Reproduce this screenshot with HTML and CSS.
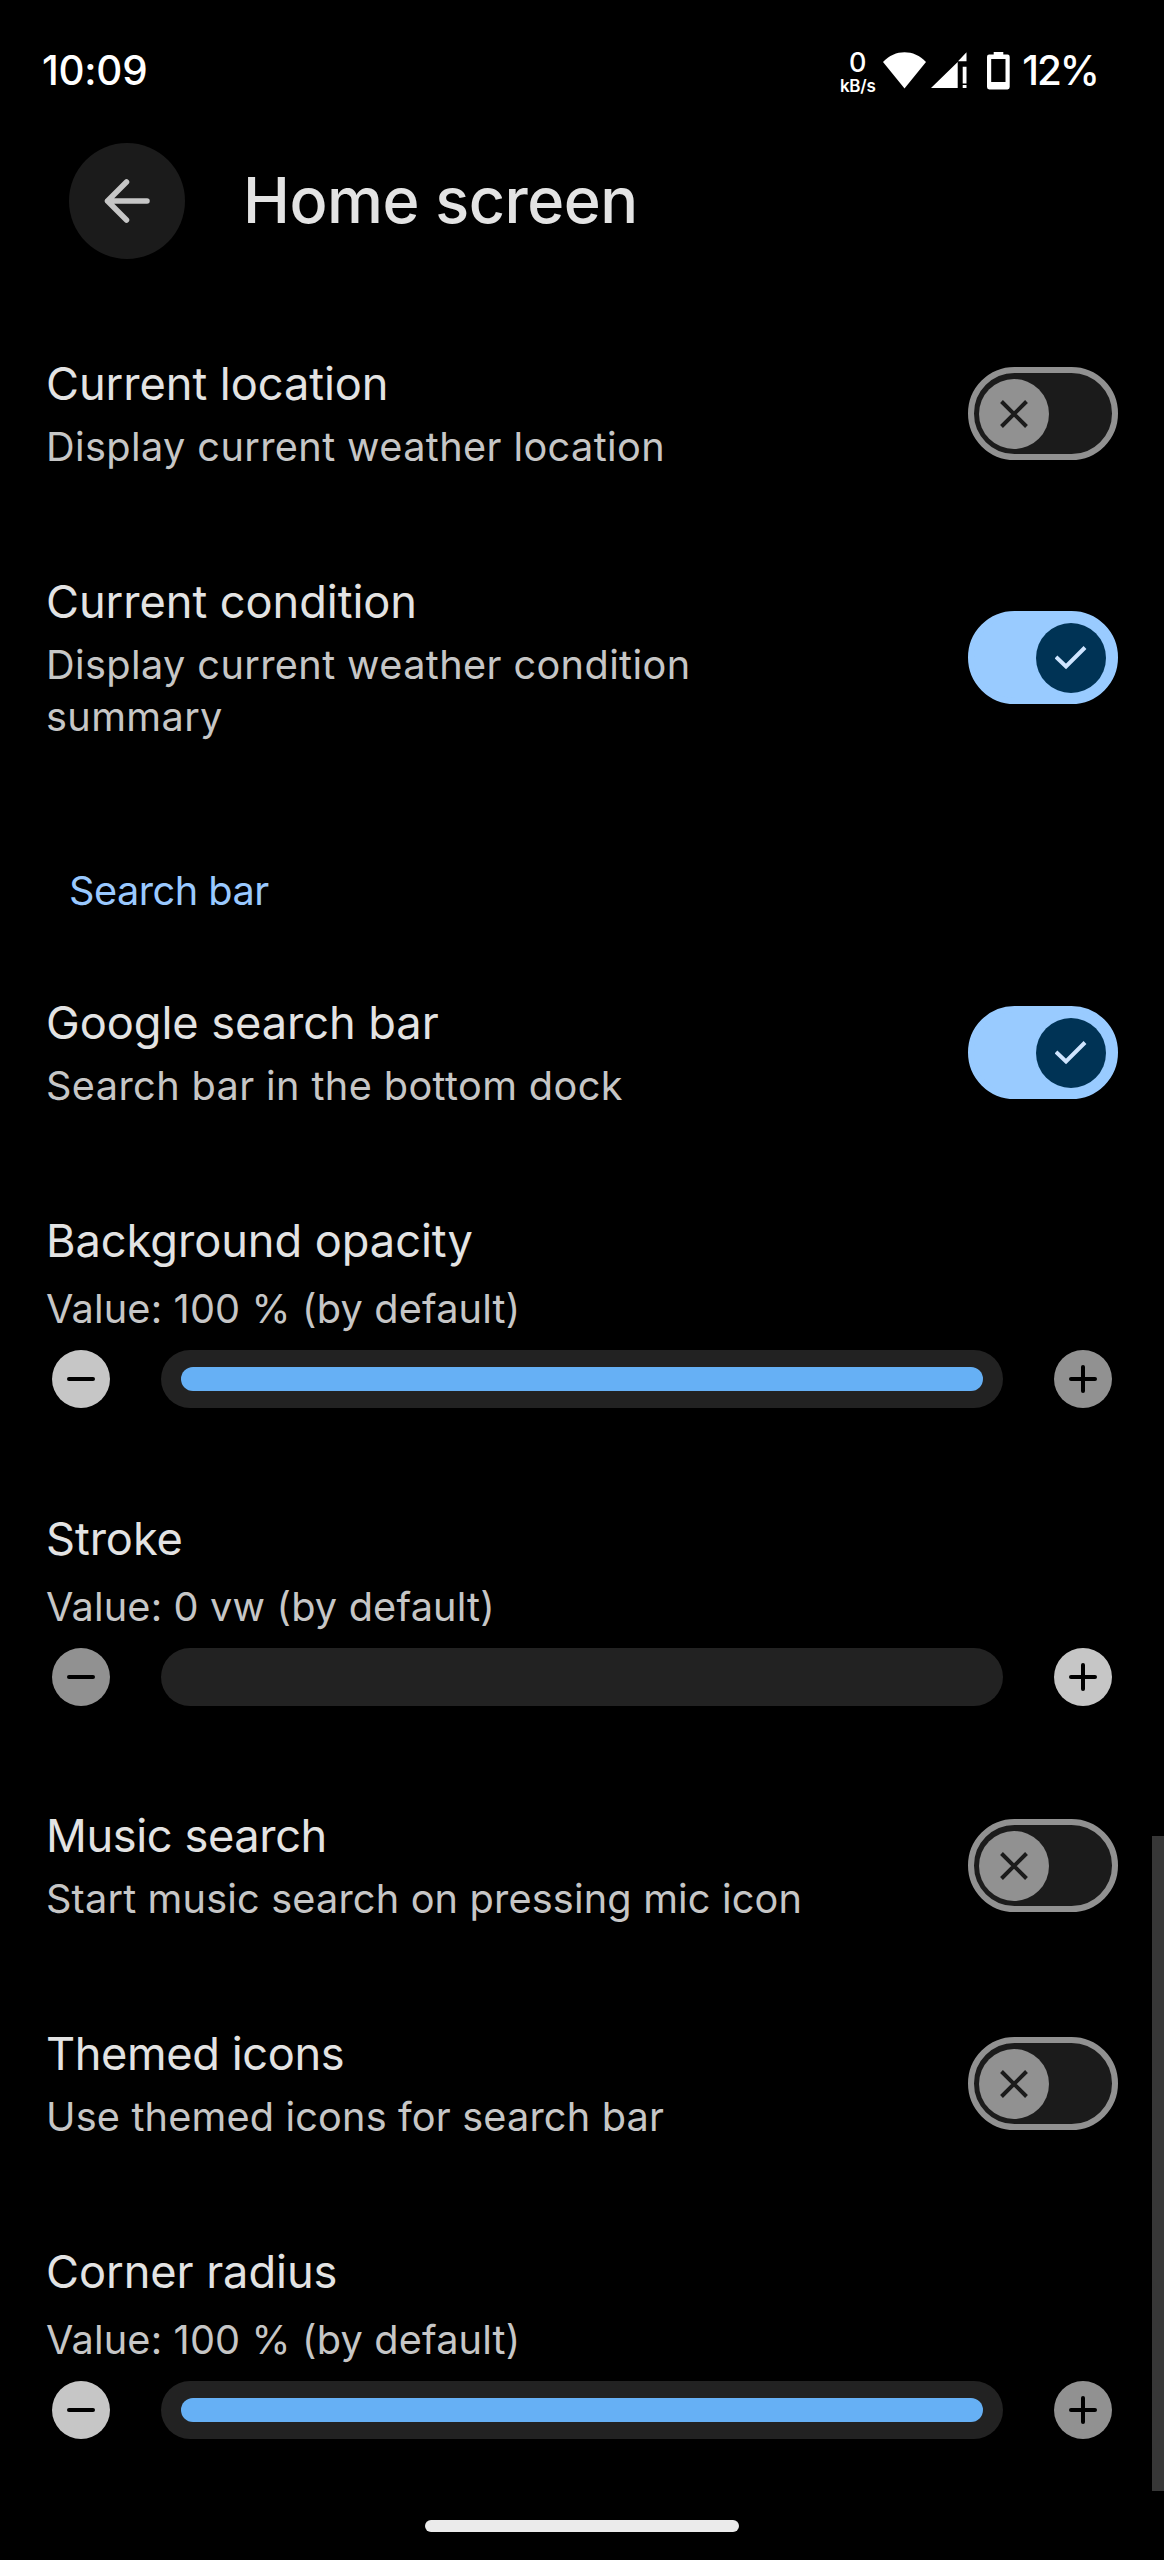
FILE: index.html
```html
<!DOCTYPE html>
<html lang="en">
<head>
    <meta charset="UTF-8">
    <meta name="viewport" content="width=device-width, initial-scale=1.0">
    <title>Home screen</title>
    <link rel="stylesheet" href="styles.css">
</head>
<body>

    <div class="status-bar">
        <span class="clock">10:09</span>
        <div class="status-icons">
            <div class="net-speed">
                <span class="speed">0</span>
                <span class="unit">kB/s</span>
            </div>
            <svg class="wifi" width="43" height="37" viewBox="0 0 43 37"><path d="M0 10C12 -3 31 -3 43 10L21.5 36.5Z" fill="#fff"/></svg>
            <svg class="signal" width="36" height="37" viewBox="0 0 36 37"><path d="M0 36L26.7 10V36ZM27 9.3L35.5 .3V9.3ZM31.7 14.7H35.5V31.5H31.7ZM31.7 33H35.5V36H31.7Z" fill="#fff"/></svg>
            <svg class="battery" width="23" height="38" viewBox="0 0 23 38"><path fill-rule="evenodd" d="M6.7 0H16.3V2.6H20.5Q22.7 2.6 22.7 4.8V35Q22.7 37.4 20.5 37.4H2.2Q0 37.4 0 35V4.8Q0 2.6 2.2 2.6H6.7ZM4.2 7V30H18.5V7Z" fill="#fff"/></svg>
            <span class="percent">12%</span>
        </div>
    </div>

    <div class="header">
        <button class="back">
            <svg width="48" height="48" viewBox="0 0 48 48"><path d="M44 24H4.5M23.500 5L4.500 24L23.500 43" fill="none" stroke="#c6c6c6" stroke-width="5.500" stroke-linecap="round" stroke-linejoin="round"/></svg>
        </button>
        <h1>Home screen</h1>
    </div>

    <div class="settings">
        <div class="item">
            <div class="text">
                <div class="title">Current location</div>
                <div class="summary wide">Display current weather location</div>
            </div>
            <div class="switch"><div class="knob"><svg width="32" height="32" viewBox="-16 -16 32 32"><path d="M-12.500 -12.500L12.500 12.500M12.500 -12.500L-12.500 12.500"/></svg></div></div>
        </div>

        <div class="item">
            <div class="text">
                <div class="title">Current condition</div>
                <div class="summary wide">Display current weather condition summary</div>
            </div>
            <div class="switch on"><div class="knob"><svg width="32" height="32" viewBox="-16 -16 32 32"><path d="M-15 -1L-5 8.500L14 -10.500"/></svg></div></div>
        </div>

        <h2>Search bar</h2>

        <div class="item">
            <div class="text">
                <div class="title">Google search bar</div>
                <div class="summary wide">Search bar in the bottom dock</div>
            </div>
            <div class="switch on"><div class="knob"><svg width="32" height="32" viewBox="-16 -16 32 32"><path d="M-15 -1L-5 8.500L14 -10.500"/></svg></div></div>
        </div>

        <div class="slider-item">
            <div class="title">Background opacity</div>
            <div class="value">Value: 100 % (by default)</div>
            <div class="slider">
                <button class="round minus"></button>
                <div class="track"><div class="fill"></div></div>
                <button class="round plus disabled"></button>
            </div>
        </div>

        <div class="slider-item">
            <div class="title">Stroke</div>
            <div class="value">Value: 0 vw (by default)</div>
            <div class="slider">
                <button class="round minus disabled"></button>
                <div class="track"></div>
                <button class="round plus"></button>
            </div>
        </div>

        <div class="item">
            <div class="text">
                <div class="title tight">Music search</div>
                <div class="summary">Start music search on pressing mic icon</div>
            </div>
            <div class="switch"><div class="knob"><svg width="32" height="32" viewBox="-16 -16 32 32"><path d="M-12.500 -12.500L12.500 12.500M12.500 -12.500L-12.500 12.500"/></svg></div></div>
        </div>

        <div class="item">
            <div class="text">
                <div class="title tight">Themed icons</div>
                <div class="summary">Use themed icons for search bar</div>
            </div>
            <div class="switch"><div class="knob"><svg width="32" height="32" viewBox="-16 -16 32 32"><path d="M-12.500 -12.500L12.500 12.500M12.500 -12.500L-12.500 12.500"/></svg></div></div>
        </div>

        <div class="slider-item">
            <div class="title">Corner radius</div>
            <div class="value">Value: 100 % (by default)</div>
            <div class="slider">
                <button class="round minus"></button>
                <div class="track"><div class="fill"></div></div>
                <button class="round plus disabled"></button>
            </div>
        </div>
    </div>

    <div class="scrollbar"></div>
    <div class="home-handle"></div>

</body>
</html>
```
FILE: styles.css
```css
* {
    box-sizing: border-box;
}
body {
    position: relative;
    margin: 0;
    height: 2560px;
    overflow: hidden;
    background-color: #000;
    color: #e3e3e3;
    font-family: Inter, Roboto, sans-serif;
}
button {
    padding: 0;
    border: none;
    cursor: pointer;
}

/* status bar */
.status-bar {
    display: flex;
    justify-content: space-between;
    align-items: center;
    height: 143px;
    padding: 0 66px 2px 42px;
    color: #fff;
    font-size: 40.4px;
    font-weight: 500;
}
.clock {
    letter-spacing: -0.25px;
}
.status-icons {
    display: flex;
    align-items: center;
}
.net-speed {
    display: flex;
    flex-direction: column;
    align-items: center;
    width: 37px;
    margin-right: 7px;
    padding-top: 2px;
}
.speed {
    font-size: 27px;
    line-height: 29px;
}
.unit {
    font-size: 17px;
    font-weight: 600;
    line-height: 18px;
    letter-spacing: -0.3px;
}
.signal {
    margin-left: 5px;
}
.battery {
    margin: 0 12px 0 20px;
}
.percent {
    letter-spacing: -2px;
}

/* title row */
.header {
    display: flex;
    align-items: center;
    height: 116px;
    margin-bottom: 46px;
    padding-left: 69px;
}
.back {
    display: flex;
    align-items: center;
    justify-content: center;
    width: 116px;
    height: 116px;
    border-radius: 50%;
    background-color: #1b1b1b;
}
h1 {
    margin: 0 0 2px 58px;
    font-size: 63px;
    font-weight: 500;
    line-height: 80px;
    letter-spacing: -0.5px;
}
h2 {
    margin: 0;
    padding: 72px 69px 27px;
    color: #9ac9ff;
    font-size: 39.7px;
    font-weight: 400;
    line-height: 52px;
    letter-spacing: -0.5px;
}

/* rows */
.item {
    display: flex;
    justify-content: space-between;
    align-items: center;
    padding: 49px 46px 50px;
}
.text {
    width: 800px;
}
.item:nth-child(2) .text {
    width: 700px;
}
.title {
    font-size: 45.2px;
    line-height: 60px;
    letter-spacing: -0.06px;
}
.title.tight {
    letter-spacing: -0.4px;
}
.summary, .value {
    color: #c6c6c6;
    font-size: 39.7px;
    line-height: 52px;
    letter-spacing: 0.16px;
}
.summary {
    margin-top: 7px;
}
.summary.wide {
    letter-spacing: 0.38px;
}

/* switches */
.switch {
    display: flex;
    align-items: center;
    width: 150px;
    height: 93px;
    padding: 0 5px;
    border: 6px solid #919191;
    border-radius: 47px;
    background-color: #1b1b1b;
}
.knob {
    display: flex;
    align-items: center;
    justify-content: center;
    width: 70px;
    height: 70px;
    border-radius: 50%;
    background-color: #919191;
}
.knob path {
    fill: none;
    stroke: #1b1b1b;
    stroke-width: 4;
}
.switch.on {
    justify-content: flex-end;
    padding-right: 6px;
    border-color: #99cbff;
    background-color: #99cbff;
}
.on .knob {
    background-color: #003355;
}
.on .knob path {
    stroke: #cfe5ff;
}

/* sliders */
.slider-item {
    height: 297.5px;
    padding: 49px 46px 0;
}
.value {
    margin-top: 12px;
}
.slider {
    display: flex;
    align-items: center;
    gap: 51px;
    margin: 15px 6px 0;
}
.track {
    flex: 1;
    height: 58px;
    padding: 17px 20px;
    border-radius: 29px;
    background-color: #222;
}
.fill {
    height: 24px;
    border-radius: 12px;
    background-color: #66b0f5;
}
.round {
    display: grid;
    place-items: center;
    width: 58px;
    height: 58px;
    border-radius: 50%;
    background-color: #c6c6c6;
}
.round.disabled {
    background-color: #919191;
}
.round::before, .plus::after {
    content: "";
    grid-area: 1 / 1;
    width: 28px;
    height: 4px;
    border-radius: 2px;
    background-color: #000;
}
.plus::after {
    transform: rotate(90deg);
}

/* overlays */
.scrollbar {
    position: absolute;
    top: 1836px;
    right: 0;
    width: 12px;
    height: 655px;
    background-color: #373737;
}
.home-handle {
    position: absolute;
    top: 2520px;
    left: 425px;
    width: 314px;
    height: 12px;
    border-radius: 6px;
    background-color: #ebebeb;
}
```
